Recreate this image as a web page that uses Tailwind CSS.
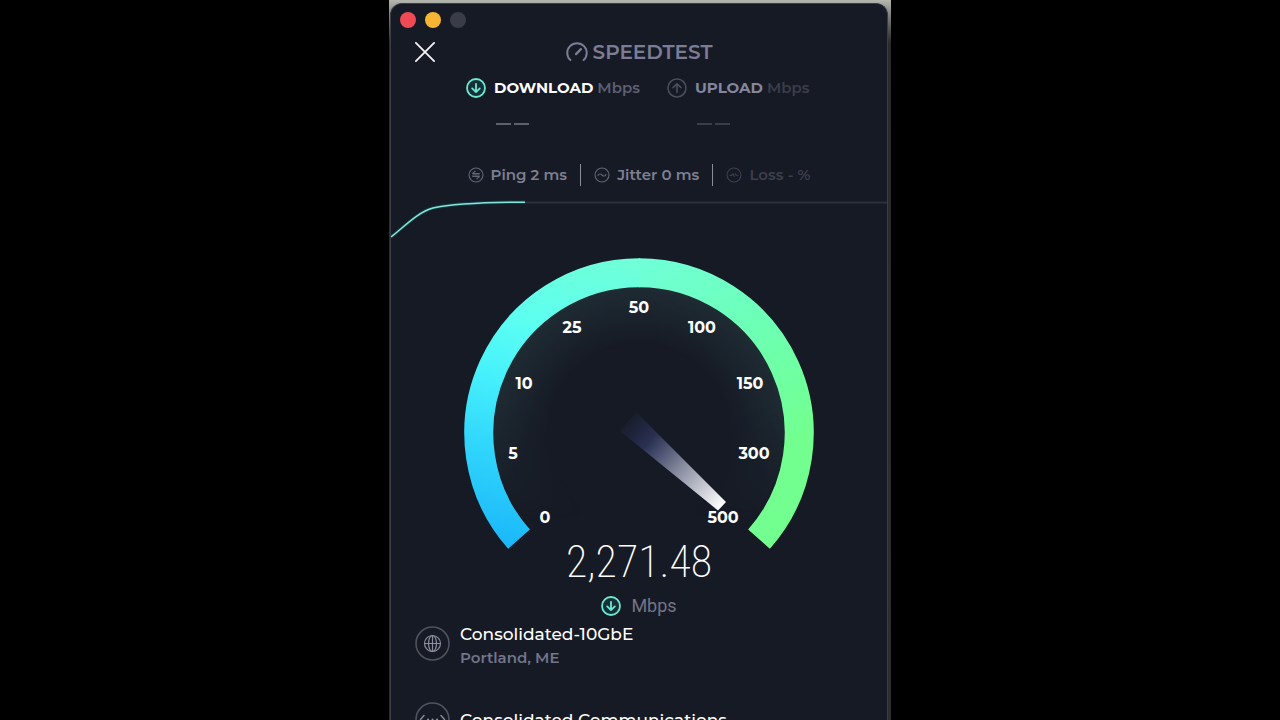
<!DOCTYPE html>
<html lang="en">
<head>
    <meta charset="UTF-8" />
    <meta name="viewport" content="width=device-width, initial-scale=1.0" />
    <title>Speedtest</title>
    <script src="https://cdn.jsdelivr.net/npm/@tailwindcss/browser@4"></script>
</head>
<body class="h-screen overflow-hidden bg-black font-['Montserrat','Inter',sans-serif] text-white">
<!-- desktop behind the window -->
<div class="mx-auto h-full w-full max-w-[502px] overflow-hidden bg-linear-to-b from-[#b4b7b0] from-0% via-[#2a2a2d] via-6% to-[#2e2d30] pt-[3px] pr-[3px] pl-px">
<main class="min-h-full rounded-t-xl border border-b-0 border-[#3c3d43] bg-[#161a25]">

    <!-- window buttons -->
    <div class="flex h-8 items-center gap-[9px] pl-[9px]">
        <button aria-label="Close window" class="size-4 rounded-full bg-[#f04a55]"></button>
        <button aria-label="Minimize window" class="size-4 rounded-full bg-[#f5b532]"></button>
        <button aria-label="Zoom window" class="size-4 rounded-full bg-[#3a3c48]"></button>
    </div>

    <!-- header -->
    <header class="grid h-8 grid-cols-[1fr_auto_1fr] items-center">
        <button aria-label="Close" class="ml-6 size-5">
            <svg viewBox="0 0 20 20" fill="none" stroke="#f4f4f8" stroke-width="1.8" stroke-linecap="round"><path d="M.9.9l18.2 18.2M19.1.9L.9 19.1" /></svg>
        </button>
        <h1 class="flex items-center gap-[5px] text-xl font-semibold text-[#7c7d94]">
            <svg class="size-[22px]" viewBox="0 0 21 21" fill="none" stroke="currentColor" stroke-width="1.9" stroke-linecap="round">
                <path d="M4.2 18.2A9.3 9.3 0 1 1 16.8 18.2" /><path d="M9.6 12.5l4.600-4.700" stroke-width="2.2" />
            </svg>
            SPEEDTEST
        </h1>
    </header>

    <!-- download / upload -->
    <section class="mx-auto grid w-[346px] max-w-full grid-cols-[201px_auto] text-[15px] font-bold">
        <div>
            <h2 class="flex h-10 items-center">
                <svg class="mr-2 size-5" viewBox="0 0 20 20" fill="none" stroke="#6fe8d0" stroke-width="1.8" stroke-linecap="round" stroke-linejoin="round">
                    <circle cx="10" cy="10" r="9" fill="#153039" /><path d="M10 5.8v8.2M6.2 10.4l3.8 3.7 3.8-3.7" />
                </svg>
                DOWNLOAD <span class="ml-1 font-semibold text-[#5d5f72]">Mbps</span>
            </h2>
            <div class="flex h-8 items-center gap-[3px] pl-[30px]">
                <i class="h-0.5 w-[15px] bg-[#5d5f6d]"></i><i class="h-0.5 w-[15px] bg-[#5d5f6d]"></i>
            </div>
        </div>
        <div>
            <h2 class="flex h-10 items-center text-[#85869d]">
                <svg class="mr-2 size-5" viewBox="0 0 20 20" fill="none" stroke="#4b4d5b" stroke-width="1.6" stroke-linecap="round" stroke-linejoin="round">
                    <circle cx="10" cy="10" r="9" /><path d="M10 14.4V5.8M6 9.6l4-3.9 4 3.9" />
                </svg>
                UPLOAD <span class="ml-1 font-semibold text-[#3b3d4b]">Mbps</span>
            </h2>
            <div class="flex h-8 items-center gap-[3px] pl-[30px]">
                <i class="h-0.5 w-[15px] bg-[#3b3d49]"></i><i class="h-0.5 w-[15px] bg-[#3b3d49]"></i>
            </div>
        </div>
    </section>

    <!-- latency -->
    <section class="mx-auto mt-5 flex h-[30px] w-[343px] max-w-full items-center justify-between text-[15px] font-semibold text-[#7e7f93]">
        <p class="flex items-center gap-[7px]">
            <svg class="size-4" viewBox="0 0 16 16" fill="none" stroke="#636575" stroke-width="1.1" stroke-linecap="round" stroke-linejoin="round">
                <circle cx="8" cy="8" r="7" /><path d="M11.3 6.5H4.6l2.6-2.3M4.8 8h6.4M4.7 9.5h6.7l-2.6 2.3" />
            </svg>
            Ping 2 ms
        </p>
        <i class="h-[22px] w-px bg-[#8b8d9a]"></i>
        <p class="flex items-center gap-[7px]">
            <svg class="size-4" viewBox="0 0 16 16" fill="none" stroke="#636575" stroke-width="1.1" stroke-linecap="round">
                <circle cx="8" cy="8" r="7" /><path d="M4 8.6C5 6.6 6.6 6.6 8 8s3 1.5 4-.6" />
            </svg>
            Jitter 0 ms
        </p>
        <i class="h-[22px] w-px bg-[#8b8d9a]"></i>
        <p class="flex items-center gap-[7px] text-[#3d3f4c]">
            <svg class="size-4" viewBox="0 0 16 16" fill="none" stroke="currentColor" stroke-width="1.1" stroke-linecap="round" stroke-linejoin="round">
                <circle cx="8" cy="8" r="7" /><path d="M4 8.4h1.6l1.5-1.6 1 2.6M9.2 6.8l1.2 1.5H12" />
            </svg>
            Loss - %
        </p>
    </section>

    <!-- progress line -->
    <svg class="mt-2 block w-full" viewBox="0 0 496 42" fill="none">
        <path d="M134 4.5H496" stroke="#2d2f3a" stroke-width="2" />
        <path d="M0 39C14 28 27 14 42 10 58 6.5 94 4.3 134 4.2" stroke="#143a43" stroke-width="3.5" />
        <path d="M0 39C14 28 27 14 42 10 58 6.5 94 4.3 134 4.2" stroke="#86e6d8" stroke-width="1.5" />
    </svg>

    <!-- gauge -->
    <svg class="mx-auto mt-[18px] block w-[350px] max-w-full" viewBox="0 0 350 292" fill="none">
        <defs>
            <linearGradient id="arc-left" gradientUnits="userSpaceOnUse" x1="60" y1="290" x2="130" y2="0">
                <stop offset="0" stop-color="#1cb8fa" />
                <stop offset=".28" stop-color="#2fd4fb" />
                <stop offset=".55" stop-color="#48f2fb" />
                <stop offset=".75" stop-color="#5dfff0" />
                <stop offset="1" stop-color="#6fffd9" />
            </linearGradient>
            <linearGradient id="arc-right" gradientUnits="userSpaceOnUse" x1="175" y1="0" x2="300" y2="200">
                <stop offset="0" stop-color="#70ffda" />
                <stop offset=".5" stop-color="#6dffb5" />
                <stop offset="1" stop-color="#72ff90" />
            </linearGradient>
            <radialGradient id="glow" gradientUnits="userSpaceOnUse" cx="175" cy="175" r="147">
                <stop offset=".6" stop-color="#4f8a84" stop-opacity="0" />
                <stop offset="1" stop-color="#4f8a84" stop-opacity=".16" />
            </radialGradient>
            <linearGradient id="glow-fade" x1="0" y1="0" x2="0" y2="1">
                <stop offset=".5" stop-color="#fff" />
                <stop offset=".9" stop-color="#000" />
            </linearGradient>
            <mask id="glow-mask"><rect width="350" height="292" fill="url(#glow-fade)" /></mask>
            <linearGradient id="needle" gradientUnits="userSpaceOnUse" x1="161" y1="162" x2="258" y2="248">
                <stop offset="0" stop-color="#272c50" stop-opacity=".1" />
                <stop offset=".25" stop-color="#2b3358" stop-opacity=".9" />
                <stop offset=".55" stop-color="#82869b" />
                <stop offset="1" stop-color="#fff" />
            </linearGradient>
        </defs>
        <circle cx="175" cy="175" r="147" fill="url(#glow)" mask="url(#glow-mask)" />
        <path d="M55 281.2A160.3 160.3 0 0 1 176 14.7" stroke="url(#arc-left)" stroke-width="29" />
        <path d="M175 14.7A160.3 160.3 0 0 1 295 281.2" stroke="url(#arc-right)" stroke-width="29" />
        <path d="M156 173L172 154L262 244L254 252.5Z" fill="url(#needle)" />
        <g class="fill-white text-base font-bold" text-anchor="middle">
            <text x="81" y="265">0</text>
            <text x="49" y="201">5</text>
            <text x="60" y="131">10</text>
            <text x="108" y="75">25</text>
            <text x="175" y="55">50</text>
            <text x="238" y="75">100</text>
            <text x="286" y="131">150</text>
            <text x="290" y="201">300</text>
            <text x="259" y="265">500</text>
        </g>
    </svg>

    <p class="-mt-3 text-center font-['Roboto_Condensed','Open_Sans_Condensed','Roboto',sans-serif] text-[44px] leading-[48px] font-extralight">2,271.48</p>
    <p class="mt-2 flex h-6 items-center justify-center gap-2.5 font-['Roboto',sans-serif] text-lg text-[#737485]">
        <svg class="size-5" viewBox="0 0 20 20" fill="none" stroke="#6fe8d0" stroke-width="1.8" stroke-linecap="round" stroke-linejoin="round">
            <circle cx="10" cy="10" r="9" fill="#153039" /><path d="M10 5.8v8.2M6.2 10.4l3.8 3.7 3.8-3.7" />
        </svg>
        Mbps
    </p>

    <!-- server and provider -->
    <section class="mt-1 flex items-start gap-2.5 pl-6">
        <svg class="mt-1 size-[35px] shrink-0" viewBox="0 0 35 35" fill="none" stroke="#50525f" stroke-width="1.6">
            <circle cx="17.5" cy="17.5" r="16.5" />
            <g stroke="#8b8c9e" stroke-width="1.2"><circle cx="17.5" cy="17.5" r="8" /><ellipse cx="17.5" cy="17.5" rx="4" ry="8" /><path d="M17.5 9.5v16M9.5 17.5h16" /></g>
        </svg>
        <div>
            <h3 class="text-[17px] leading-6 font-medium">Consolidated-10GbE</h3>
            <p class="text-[15px] leading-6 font-semibold text-[#74758a]">Portland, ME</p>
        </div>
    </section>
    <section class="mt-8 flex items-center gap-2.5 pl-6">
        <svg class="size-[35px] shrink-0" viewBox="0 0 35 35" fill="none" stroke="#50525f" stroke-width="1.6">
            <circle cx="17.5" cy="17.5" r="16.5" />
            <g stroke="#8b8c9e" stroke-width="1.4" stroke-linecap="round"><path d="M9 13.5l-3.5 4 3.5 4M26 13.5l3.5 4-3.5 4" /><path d="M13 17.5h.1M17.5 17.5h.1M22 17.5h.1" stroke-width="2" /></g>
        </svg>
        <h3 class="text-[17px] leading-6 font-medium">Consolidated Communications</h3>
    </section>
</main>
</div>
</body>
</html>
